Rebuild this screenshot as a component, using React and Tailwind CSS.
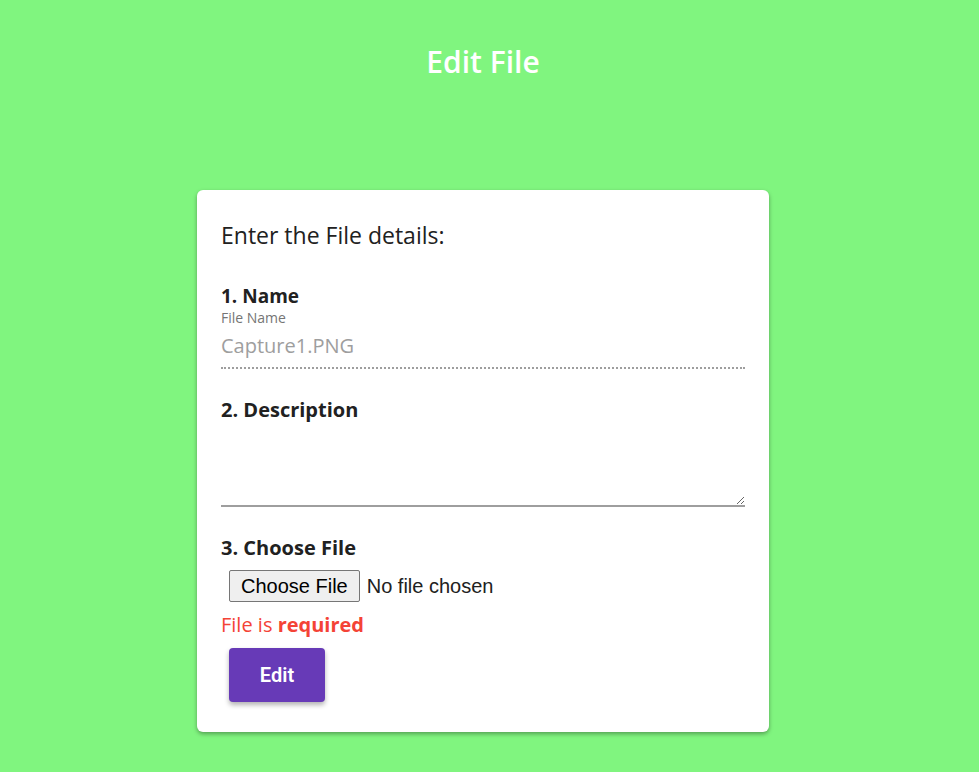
export default function App() {
  return (
    <div className="min-h-screen bg-[#80f57f] pt-[40px] pb-10 pr-[13px]" style={{ fontFamily: '"Open Sans", "Noto Sans", sans-serif' }}>
      <h1 className="text-center text-[30px] font-semibold leading-[44px] text-white">Edit File</h1>

      <div className="mx-auto mt-[106px] w-[572px] rounded-md bg-white px-6 pt-[30px] pb-[30px] shadow-[0_2px_4px_rgba(0,0,0,0.35)]">
        <p className="text-[23px] leading-[30px] text-[#212121]">Enter the File details:</p>

        {/* Name */}
        <div className="mt-[36px]">
          <h3 className="text-[19px] font-bold leading-[20px] text-[#212121]">1. Name</h3>
          <label className="mt-[2px] block text-[14px] leading-[20px] text-[#757575]">File Name</label>
          <input
            type="text"
            disabled
            value="Capture1.PNG"
            className="block w-full border-0 border-b-2 border-dotted border-[#9e9e9e] bg-transparent pt-[4px] pb-[7px] text-[20px] leading-[28px] text-[#9e9e9e] outline-none"
          />
        </div>

        {/* Description */}
        <div className="mt-[30px]">
          <h3 className="text-[20px] font-bold leading-[22px] text-[#212121]">2. Description</h3>
          <textarea
            rows={3}
            className="mt-[12px] block h-[74px] w-full border-0 border-b-2 border-[#9e9e9e] bg-transparent text-[18px] outline-none"
          />
        </div>

        {/* File */}
        <div className="mt-[30px]">
          <h3 className="text-[20px] font-bold leading-[22px] text-[#212121]">3. Choose File</h3>
          <input
            type="file"
            className="ml-2 mt-[11px] block text-[20px] text-[#212121] file:mr-[7px] file:rounded-[2px] file:border file:border-[#767676] file:bg-[#efefef] file:px-[11px] file:py-0 file:text-[20px] file:text-black"
            style={{ fontFamily: '"Liberation Sans", Arial, sans-serif' }}
          />
          <p className="mt-[10px] text-[20px] leading-[26px] text-[#f44336]">
            File is <span className="font-bold">required</span>
          </p>
        </div>

        <button
          className="ml-2 mt-[10px] h-[54px] w-[96px] rounded-[4px] bg-[#673ab7] text-[20px] font-semibold text-white shadow-[0_3px_5px_rgba(0,0,0,0.3)]"
          style={{ fontFamily: 'Roboto, sans-serif' }}
        >
          Edit
        </button>
      </div>
    </div>
  );
}
